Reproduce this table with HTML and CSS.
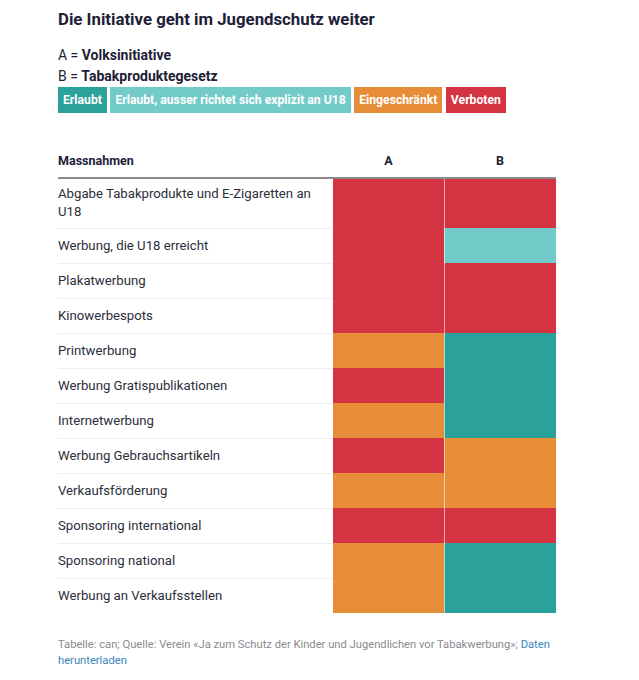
FILE: index.html
```html
<!DOCTYPE html>
<html lang="de">
<head>
<meta charset="utf-8">
<link rel="stylesheet" href="styles.css">
</head>
<body>
<div class="page">
  <h1 class="title">Die Initiative geht im Jugendschutz weiter</h1>
  <div class="keys">
    <div class="key">A = <b>Volksinitiative</b></div>
    <div class="key">B = <b>Tabakproduktegesetz</b></div>
  </div>
  <div class="legend">
    <span class="tag c-ok">Erlaubt</span>
    <span class="tag c-ok18">Erlaubt, ausser richtet sich explizit an U18</span>
    <span class="tag c-lim">Eingeschränkt</span>
    <span class="tag c-no">Verboten</span>
  </div>
  <div class="table">
    <div class="th label">Massnahmen</div>
    <div class="th center">A</div>
    <div class="th center">B</div>

    <div class="td label first">Abgabe Tabakprodukte und E-Zigaretten an U18</div>
    <div class="cell c-no"></div><div class="cell b c-no"></div>

    <div class="td label">Werbung, die U18 erreicht</div>
    <div class="cell c-no"></div><div class="cell b c-ok18"></div>

    <div class="td label">Plakatwerbung</div>
    <div class="cell c-no"></div><div class="cell b c-no"></div>

    <div class="td label">Kinowerbespots</div>
    <div class="cell c-no"></div><div class="cell b c-no"></div>

    <div class="td label">Printwerbung</div>
    <div class="cell c-lim"></div><div class="cell b c-ok"></div>

    <div class="td label">Werbung Gratispublikationen</div>
    <div class="cell c-no"></div><div class="cell b c-ok"></div>

    <div class="td label">Internetwerbung</div>
    <div class="cell c-lim"></div><div class="cell b c-ok"></div>

    <div class="td label">Werbung Gebrauchsartikeln</div>
    <div class="cell c-no"></div><div class="cell b c-lim"></div>

    <div class="td label">Verkaufsförderung</div>
    <div class="cell c-lim"></div><div class="cell b c-lim"></div>

    <div class="td label">Sponsoring international</div>
    <div class="cell c-no"></div><div class="cell b c-no"></div>

    <div class="td label">Sponsoring national</div>
    <div class="cell c-lim"></div><div class="cell b c-ok"></div>

    <div class="td label">Werbung an Verkaufsstellen</div>
    <div class="cell c-lim"></div><div class="cell b c-ok"></div>
  </div>
  <p class="source">Tabelle: can; Quelle: Verein «Ja zum Schutz der Kinder und Jugendlichen vor Tabakwerbung»; <a href="#">Daten herunterladen</a></p>
</div>
</body>
</html>
```
FILE: styles.css
```css
html, body { margin: 0; padding: 0; background: #fff; }
body { font-family: Roboto, "Noto Sans", "Liberation Sans", sans-serif; color: #1f2133; }
.page { padding: 7px 0 0 58px; width: 498px; }
.title { margin: 0; font-size: 16.8px; line-height: 24px; font-weight: 700; color: #1d2036; }
.keys { margin-top: 14px; }
.key { font-size: 14px; line-height: 21px; color: #1d2036; }
.key b { font-weight: 700; }
.legend { display: flex; gap: 3.5px; margin-top: 0; }
.tag { display: block; height: 26px; line-height: 26px; padding: 0 5px; font-size: 12.2px; font-weight: 700; color: #fff; }
.c-ok { background: #2ba19b; }
.c-ok18 { background: #72cbc9; }
.c-lim { background: #e78d37; }
.c-no { background: #d43441; }
.table { display: grid; grid-template-columns: 275px 111px 112px; margin-top: 40px; }
.th { font-size: 12.5px; font-weight: 700; line-height: 16px; padding-bottom: 8px; border-bottom: 2px solid #8a8a8f; color: #1d2036; }
.center { text-align: center; }
.td { font-size: 13.2px; line-height: 18px; color: #2c2e3a; padding: 8px 20px 8px 0; min-height: 18px; border-top: 1px solid #eeeeee; display: flex; align-items: center; }
.td.first { border-top: none; padding: 6px 12px 7px 0; }
.cell.b { border-left: 1.5px solid rgba(255,255,255,0.6); }
.source { margin: 24px 0 0; font-size: 11.2px; line-height: 16px; color: #8a8a8f; }
.source a { color: #3e84b8; text-decoration: none; }
```
